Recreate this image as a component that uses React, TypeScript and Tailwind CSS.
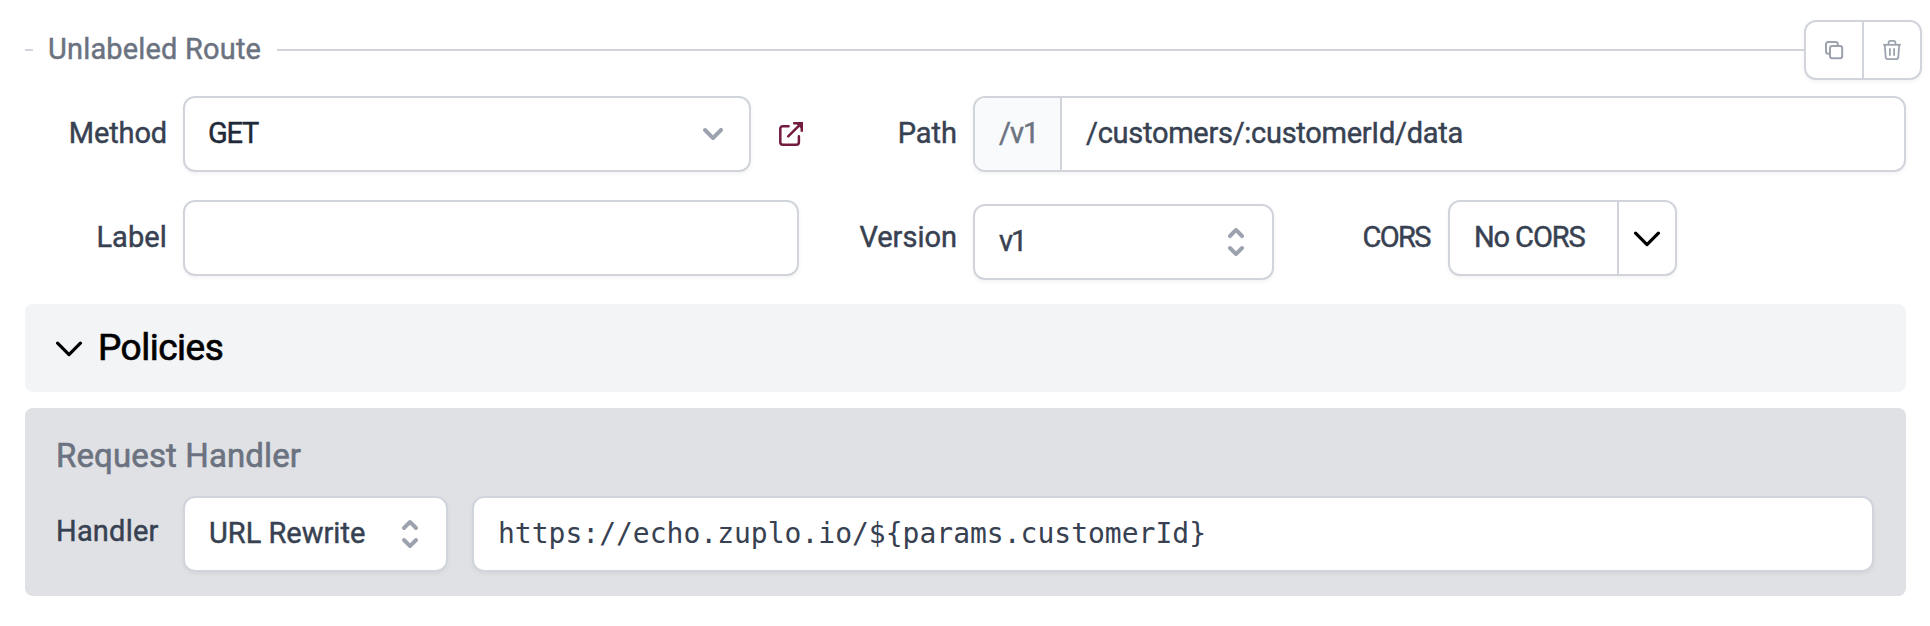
import React from "react";
import type { ReactNode } from "react";

const box = "flex h-[76px] shrink-0 items-center rounded-xl border-2 border-[#d1d5db] bg-white shadow-[0_2px_4px_rgba(0,0,0,0.05)]";

function FieldLabel({ className, children }: { className: string; children: ReactNode }) {
  return (
    <label className={`flex h-[76px] shrink-0 items-center justify-end pb-0.5 text-[#374151] ${className}`}>
      {children}
    </label>
  );
}

function ChevronDown() {
  return (
    <svg viewBox="0 0 20 20" className="size-10 shrink-0 fill-[#9ca3af]">
      <path d="M5.293 7.293a1 1 0 011.414 0L10 10.586l3.293-3.293a1 1 0 111.414 1.414l-4 4a1 1 0 01-1.414 0l-4-4a1 1 0 010-1.414z" />
    </svg>
  );
}

function Selector() {
  return (
    <svg viewBox="0 0 20 20" className="size-10 shrink-0 fill-[#9ca3af]">
      <path d="M10 3a1 1 0 01.707.293l3 3a1 1 0 01-1.414 1.414L10 5.414 7.707 7.707a1 1 0 01-1.414-1.414l3-3A1 1 0 0110 3zm-3.707 9.293a1 1 0 011.414 0L10 14.586l2.293-2.293a1 1 0 011.414 1.414l-3 3a1 1 0 01-1.414 0l-3-3a1 1 0 010-1.414z" />
    </svg>
  );
}

function WideChevron({ className = "" }: { className?: string }) {
  return (
    <svg viewBox="0 0 28 16" className={`h-4 w-7 shrink-0 ${className}`} fill="none" stroke="#000" strokeWidth="3.2" strokeLinecap="round" strokeLinejoin="round">
      <path d="M2.6 2.2 14 13.6 25.4 2.2" />
    </svg>
  );
}

function ExternalLink() {
  return (
    <svg viewBox="0 0 24 24" className="size-6 shrink-0" fill="none" stroke="#741b40" strokeWidth="2.5" strokeLinecap="round" strokeLinejoin="round">
      <path d="M9.6 4.2H3.7A2.4 2.4 0 0 0 1.3 6.6V20.3A2.4 2.4 0 0 0 3.7 22.7H17.5A2.4 2.4 0 0 0 19.9 20.3V14.2" />
      <path d="M9.2 14.4 21.3 2.3" />
      <path d="M14.2 1.2H22.8V9.8" strokeLinecap="butt" strokeLinejoin="miter" />
      <path d="M16.8 1.2H22.8V7.2Z" fill="#741b40" stroke="none" />
    </svg>
  );
}

function CopyIcon() {
  return (
    <svg viewBox="0 0 20 20" className="size-5" fill="none" stroke="#9ca3af" strokeWidth="2" strokeLinejoin="round" strokeLinecap="round">
      <rect x="6" y="6" width="12.2" height="12.2" rx="2.2" />
      <path d="M5.7 13.8H4.2A2.2 2.2 0 0 1 2 11.6V4.2A2.2 2.2 0 0 1 4.2 2H11.6A2.2 2.2 0 0 1 13.8 4.2V5.7" />
    </svg>
  );
}

function TrashIcon() {
  return (
    <svg viewBox="0 0 20 20" className="size-5" fill="none" stroke="#9ca3af" strokeWidth="1.8" strokeLinejoin="round">
      <path d="M1.2 4.8H18.8" />
      <path d="M6.6 4.6V2.6A1.7 1.7 0 0 1 8.3 .9H11.7A1.7 1.7 0 0 1 13.4 2.6V4.6" />
      <path d="M2.8 5 3.7 17.2A2.1 2.1 0 0 0 5.8 19.1H14.2A2.1 2.1 0 0 0 16.3 17.2L17.2 5" />
      <path d="M7.9 8.2V15.8M12.1 8.2V15.8" />
    </svg>
  );
}

export default function App() {
  return (
    <main className="h-[626px] w-[1930px] overflow-hidden bg-white pt-5 pl-[25px] font-['Roboto',sans-serif] text-[29px] leading-10 font-normal text-[#374151] [-webkit-text-stroke:0.45px]">
      <header className="flex h-[60px] w-[1897px] items-center">
        <div className="h-0.5 w-2 bg-[#d1d5db]" />
        <h2 className="w-[244px] shrink-0 pb-0.5 pl-[15px] tracking-[0.17px] whitespace-nowrap text-[#6b7280]">Unlabeled Route</h2>
        <div className="h-0.5 grow bg-[#d1d5db]" />
        <div className="flex h-[60px] w-[118px] shrink-0 rounded-xl border-2 border-[#d1d5db] bg-white shadow-[0_2px_4px_rgba(0,0,0,0.05)]">
          <button className="flex w-[58px] items-center justify-center border-r-2 border-[#d1d5db]"><CopyIcon /></button>
          <button className="flex w-14 items-center justify-center"><TrashIcon /></button>
        </div>
      </header>

      <div className="mt-4 flex w-[1881px]">
        <FieldLabel className="w-[142px] tracking-[-0.15px]">Method</FieldLabel>
        <div className={`${box} ml-4 w-[568px] justify-between pr-4 pl-[23px]`}>
          <span className="pb-0.5 tracking-[-1.2px] text-[#1f2937]">GET</span>
          <ChevronDown />
        </div>
        <a className="ml-7 flex h-[76px] items-center"><ExternalLink /></a>
        <FieldLabel className="w-[154px]">Path</FieldLabel>
        <div className={`${box} ml-4 w-[933px] overflow-hidden`}>
          <span className="flex h-full w-[87px] shrink-0 items-center border-r-2 border-[#d1d5db] bg-[#f9fafb] pb-0.5 pl-6 tracking-[-1px] text-[#6b7280]">/v1</span>
          <span className="pb-0.5 pl-6 tracking-[-0.28px]">/customers/:customerId/data</span>
        </div>
      </div>

      <div className="mt-7 flex h-20 w-[1881px]">
        <FieldLabel className="w-[142px] tracking-[0.1px]">Label</FieldLabel>
        <div className={`${box} ml-4 w-[616px]`} />
        <FieldLabel className="w-[158px]">Version</FieldLabel>
        <div className={`${box} mt-1 ml-4 w-[301px] justify-between pr-4 pl-6`}>
          <span className="pb-0.5 tracking-[-2px]">v1</span>
          <Selector />
        </div>
        <FieldLabel className="w-[158px] pr-0.5 tracking-[-1.6px]">CORS</FieldLabel>
        <div className={`${box} ml-4 w-[229px]`}>
          <span className="flex h-full w-[169px] items-center border-r-2 border-[#d1d5db] pb-0.5 pl-6 tracking-[-1.1px]">No CORS</span>
          <span className="flex grow justify-center"><WideChevron className="mt-0.5" /></span>
        </div>
      </div>

      <section className="mt-6 flex h-[88px] w-[1881px] items-center rounded-lg bg-[#f3f4f6] pl-[30px]">
        <WideChevron className="mt-0.5" />
        <h3 className="ml-[15px] pb-px text-[37px] tracking-[-0.5px] text-black [-webkit-text-stroke:0.7px]">Policies</h3>
      </section>

      <section className="mt-4 h-[188px] w-[1881px] rounded-lg bg-[#e0e1e5] pt-7 pr-8 pl-[31px]">
        <h3 className="text-[33px] tracking-[0.12px] text-[#6b7280] [-webkit-text-stroke:0.6px]">Request Handler</h3>
        <div className="mt-5 flex">
          <label className="flex h-[76px] w-[127px] shrink-0 items-center pb-1.5 tracking-[0.2px]">Handler</label>
          <div className={`${box} w-[265px] justify-between pr-4 pl-6`}>
            <span className="pb-0.5">URL Rewrite</span>
            <Selector />
          </div>
          <div className={`${box} ml-6 w-[1402px] pl-6 font-['DejaVu_Sans_Mono',monospace] text-[28px] font-normal [-webkit-text-stroke:0]`}>
            {"https://echo.zuplo.io/${params.customerId}"}
          </div>
        </div>
      </section>
    </main>
  );
}
